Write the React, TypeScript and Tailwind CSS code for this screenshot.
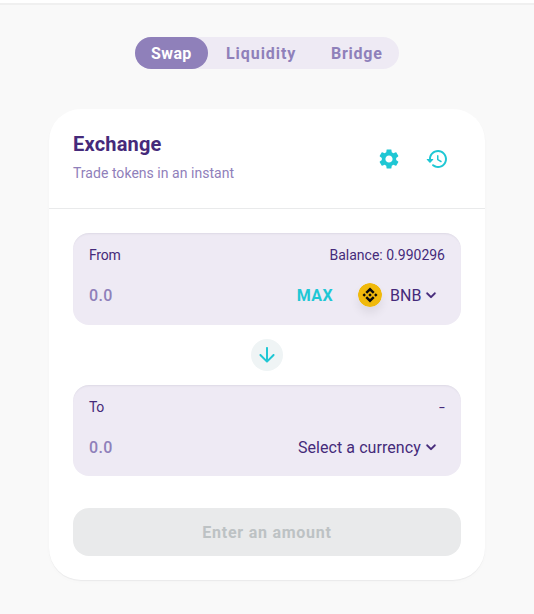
import React from "react";

const HistoryIcon = () => (
  <svg viewBox="0 0 24 24" className="size-6 fill-[#1fc7d4]">
    <path d="M13.26 3C8.17 2.86 4 6.95 4 12H2.21c-.45 0-.67.54-.35.85l2.79 2.8c.2.2.51.2.71 0l2.79-2.8c.31-.31.09-.85-.36-.85H6c0-3.9 3.18-7.05 7.1-7 3.72.05 6.85 3.18 6.9 6.9.05 3.91-3.1 7.1-7 7.1-1.61 0-3.1-.55-4.28-1.48-.4-.31-.96-.28-1.32.08-.42.42-.39 1.13.08 1.49C9 20.29 10.91 21 13 21c5.05 0 9.14-4.17 9-9.26-.13-4.69-4.05-8.61-8.74-8.74zm-.51 5c-.41 0-.75.34-.75.75v3.68c0 .35.19.68.49.86l3.12 1.85c.36.21.82.09 1.03-.26.21-.36.09-.82-.26-1.03l-2.88-1.71v-3.4c0-.4-.34-.74-.75-.74z" />
  </svg>
);

const CogIcon = () => (
  <svg viewBox="0 0 24 24" className="size-6 fill-[#1fc7d4]">
    <path d="M19.14 12.94c.04-.3.06-.61.06-.94 0-.32-.02-.64-.07-.94l2.03-1.58c.18-.14.23-.41.12-.61l-1.92-3.32c-.12-.22-.37-.29-.59-.22l-2.39.96c-.5-.38-1.03-.7-1.62-.94l-.36-2.54c-.04-.24-.24-.41-.48-.41h-3.84c-.24 0-.43.17-.47.41l-.36 2.54c-.59.24-1.13.57-1.62.94l-2.39-.96c-.22-.08-.47 0-.59.22L2.74 8.87c-.12.21-.08.47.12.61l2.03 1.58c-.05.3-.09.63-.09.94s.02.64.07.94l-2.03 1.58c-.18.14-.23.41-.12.61l1.92 3.32c.12.22.37.29.59.22l2.39-.96c.5.38 1.03.7 1.62.94l.36 2.54c.05.24.24.41.48.41h3.84c.24 0 .44-.17.47-.41l.36-2.54c.59-.24 1.13-.56 1.62-.94l2.39.96c.22.08.47 0 .59-.22l1.92-3.32c.12-.22.07-.47-.12-.61l-2.01-1.58zM12 15.6c-1.98 0-3.6-1.62-3.6-3.6s1.62-3.6 3.6-3.6 3.6 1.62 3.6 3.6-1.62 3.6-3.6 3.6z" />
  </svg>
);

const ArrowDown = () => (
  <svg viewBox="0 0 24 24" className="size-6 fill-[#1fc7d4]">
    <path d="M11 5v11.17l-4.88-4.88c-.39-.39-1.03-.39-1.42 0-.39.39-.39 1.02 0 1.41l6.59 6.59c.39.39 1.02.39 1.41 0l6.59-6.59c.39-.39.39-1.02 0-1.41-.39-.39-1.02-.39-1.41 0L13 16.17V5c0-.55-.45-1-1-1s-1 .45-1 1z" />
  </svg>
);

const Chevron = () => (
  <svg viewBox="0 0 24 24" className="size-5 shrink-0 fill-[#452a7a] stroke-[#452a7a] stroke-[0.4]">
    <path d="M8.12 9.29L12 13.17l3.88-3.88c.39-.39 1.02-.39 1.41 0 .39.39.39 1.02 0 1.41l-4.59 4.59c-.39.39-1.02.39-1.41 0L6.7 10.7c-.39-.39-.39-1.02 0-1.41.39-.38 1.03-.39 1.42 0z" />
  </svg>
);

const BnbLogo = () => (
  <svg viewBox="0 0 32 32" className="size-6 shrink-0 rounded-full shadow-[0_6px_10px_rgba(0,0,0,0.075)]">
    <circle cx="16" cy="16" r="16" fill="#f0b90b" />
    <path
      fill="#0b0b0b"
      d="M12.116 14.404L16 10.52l3.886 3.886 2.26-2.26L16 6l-6.144 6.144 2.26 2.26zM6 16l2.26-2.26L10.52 16l-2.26 2.26L6 16zm6.116 1.596L16 21.48l3.886-3.886 2.26 2.259L16 26l-6.144-6.144-.003-.003 2.263-2.257zM21.48 16l2.26-2.26L26 16l-2.26 2.26L21.48 16zm-3.188-.002h.002V16L16 18.294l-2.291-2.29-.004-.004.004-.003.401-.402.195-.195L16 13.706l2.293 2.293z"
    />
  </svg>
);

const panel =
  "flex flex-col rounded-2xl bg-[#eeeaf4] px-4 text-[#452a7a] shadow-[inset_0_2px_2px_-1px_rgba(74,74,104,0.1)]";

export default function App() {
  return (
    <div className="flex h-[614px] w-[534px] flex-col items-center overflow-hidden bg-[#f9f9f9] font-['Roboto','Noto_Sans',sans-serif]">
      <div className="h-[5px] w-full shrink-0 border-b-2 border-[#f0f0f0] bg-white" />
      <nav className="mt-8 flex h-8 w-[264px] shrink-0 rounded-2xl bg-[#eeeaf4] text-base font-bold text-[#8f80ba]">
        <a className="flex w-[73px] items-center rounded-2xl bg-[#8f80ba] pt-0.5 pl-4 text-white">
          <span className="tracking-[0.4px]">Swap</span>
        </a>
        <a className="flex w-[105px] items-center pt-0.5 pl-[18px]">
          <span className="tracking-[0.95px]">Liquidity</span>
        </a>
        <a className="flex items-center pt-0.5 pl-[18px]">
          <span className="tracking-[0.75px]">Bridge</span>
        </a>
      </nav>

      <main className="mt-10 flex h-[471px] w-[436px] shrink-0 flex-col rounded-[32px] bg-white shadow-[0_2px_12px_-8px_rgba(25,19,38,0.1),0_1px_1px_rgba(25,19,38,0.05)]">
        <header className="flex h-[100px] items-center justify-between border-b border-[#e9eaeb] px-6">
          <div className="flex flex-col">
            <h1 className="text-xl leading-[22px] font-bold tracking-[0.2px] text-[#452a7a]">Exchange</h1>
            <p className="mt-2 text-sm leading-[21px] tracking-[0.03px] text-[#8f80ba]">Trade tokens in an instant</p>
          </div>
          <div className="flex">
            <button className="flex size-12 items-center justify-center"><CogIcon /></button>
            <button className="flex size-12 items-center justify-center"><HistoryIcon /></button>
          </div>
        </header>

        <div className="flex flex-col px-6 pt-6">
          <section className={`${panel} h-[92px]`}>
            <div className="flex justify-between pt-3 text-sm leading-[21px]">
              <span className="tracking-[-0.2px]">From</span>
              <span>Balance: 0.990296</span>
            </div>
            <div className="mt-[13px] flex h-8 items-center text-base">
              <span className="flex-1 pt-0.5 font-medium tracking-[0.4px] text-[#8f80ba]">0.0</span>
              <span className="mr-[25px] pt-0.5 font-bold tracking-[0.4px] text-[#1fc7d4]">MAX</span>
              <BnbLogo />
              <span className="ml-2 w-[31px] pt-0.5">BNB</span>
              <div className="mr-1 flex"><Chevron /></div>
            </div>
          </section>

          <div className="flex h-[60px] items-center justify-center">
            <button className="flex size-8 items-center justify-center rounded-full bg-[#eff4f5]"><ArrowDown /></button>
          </div>

          <section className={`${panel} h-[91px]`}>
            <div className="flex justify-between pt-3 text-sm leading-[21px]">
              <span className="tracking-[-0.4px]">To</span>
              <span className="origin-right scale-x-150">-</span>
            </div>
            <div className="mt-[13px] flex h-8 items-center text-base">
              <span className="flex-1 pt-0.5 font-medium tracking-[0.4px] text-[#8f80ba]">0.0</span>
              <span className="w-[123px] pt-0.5 tracking-[0.06px] whitespace-nowrap">Select a currency</span>
              <div className="mr-1 flex"><Chevron /></div>
            </div>
          </section>

          <button className="mt-8 h-12 rounded-2xl bg-[#e9eaeb] pt-0.5 text-base font-bold tracking-[0.74px] text-[#bdc2c4]">
            Enter an amount
          </button>
        </div>
      </main>
    </div>
  );
}
